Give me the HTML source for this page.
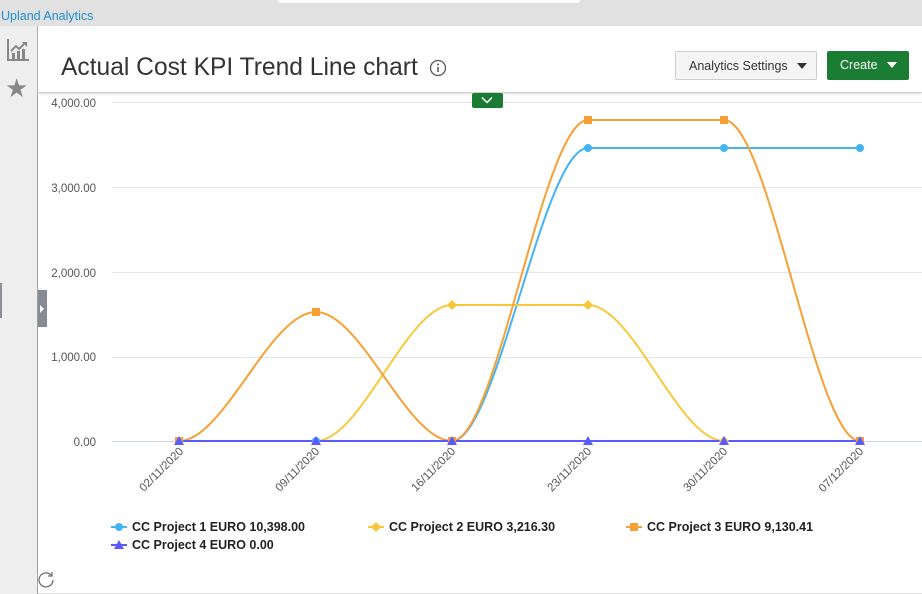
<!DOCTYPE html>
<html><head><meta charset="utf-8"><style>
body{margin:0;width:922px;height:594px;overflow:hidden;background:#fff;font-family:"Liberation Sans",sans-serif;position:relative}
.top{position:absolute;left:0;top:0;width:922px;height:26px;background:#e1e1e1}
.tab{position:absolute;left:278px;top:0;width:302px;height:3px;background:#fff;border-radius:0 0 4px 4px}
.brand{position:absolute;left:1px;top:9px;font-size:12.5px;color:#1e90d0}
.side{position:absolute;left:0;top:26px;width:37px;height:568px;background:#eeeeee;border-right:1px solid #a0a0a0}
.hdr{position:absolute;left:38px;top:26px;width:884px;height:66px;border-bottom:1px solid #d0d0d0;box-shadow:0 1px 2px #ddd}
h1{position:absolute;left:61px;top:54px;margin:0;font-weight:normal;font-size:24.6px;color:#333}
.btn{position:absolute;top:51px;height:29px;border-radius:2px;font-size:12.5px;line-height:29px;box-sizing:border-box}
.as{left:675px;width:142px;border:1px solid #ccc;background:#f5f5f5;color:#333;padding-left:13px}
.cr{left:827px;width:82px;background:#1b7d33;color:#fff;padding-left:13px}
.tri{display:inline-block;width:0;height:0;border-left:5px solid transparent;border-right:5px solid transparent;border-top:6px solid currentColor;margin-left:9px;vertical-align:1px}
</style></head><body>
<div class="top"><div class="tab"></div><div class="brand">Upland Analytics</div></div>
<div class="side"></div>
<div style="position:absolute;left:0;top:283px;width:2px;height:35px;background:#8a8f99"></div>
<div style="position:absolute;left:38px;top:290px;width:9px;height:37px;background:#878c94"></div>
<div style="position:absolute;left:40px;top:305px;width:0;height:0;border-top:4px solid transparent;border-bottom:4px solid transparent;border-left:4px solid #fff"></div>
<svg style="position:absolute;left:6px;top:38px" width="24" height="24" viewBox="0 0 24 24"><path d="M2 1v21h21" stroke="#888" stroke-width="2" fill="none"/><rect x="6" y="15" width="3" height="6" fill="#888"/><rect x="11" y="13" width="3" height="8" fill="#888"/><rect x="16" y="11" width="3" height="10" fill="#888"/><path d="M5 13l5-5 3 3 6-6" stroke="#888" stroke-width="2" fill="none"/><path d="M16 4h5v5z" fill="#888"/></svg>
<div style="position:absolute;left:5px;top:74px;font-size:26px;color:#888;line-height:28px">★</div>
<div class="hdr"></div>
<h1>Actual Cost KPI Trend Line chart</h1>
<svg style="position:absolute;left:429px;top:59px" width="18" height="18"><circle cx="9" cy="9" r="7.5" stroke="#555" stroke-width="1.3" fill="none"/><rect x="8.3" y="8" width="1.5" height="5" fill="#555"/><circle cx="9" cy="5.5" r="1" fill="#555"/></svg>
<div class="btn as">Analytics Settings<span class="tri"></span></div>
<div class="btn cr">Create<span class="tri"></span></div>
<svg style="position:absolute;left:0;top:0" width="922" height="594">
<g stroke="#e6e6e6"><line x1="112" y1="102.5" x2="922" y2="102.5"/><line x1="112" y1="187.5" x2="922" y2="187.5"/><line x1="112" y1="272.5" x2="922" y2="272.5"/><line x1="112" y1="357.5" x2="922" y2="357.5"/></g>
<rect x="472" y="93" width="31" height="15" rx="2" fill="#1b7d33"/><path d="M482 97.5l5 5 5-5" stroke="#fff" stroke-width="1.5" fill="none"/>
<line x1="112" y1="441.5" x2="922" y2="441.5" stroke="#ccd6eb"/>
<g font-size="11.5" fill="#555" text-anchor="end"><text x="96" y="107">4,000.00</text><text x="96" y="192">3,000.00</text><text x="96" y="277">2,000.00</text><text x="96" y="361">1,000.00</text><text x="96" y="446">0.00</text></g>
<g font-size="11.5" fill="#555" text-anchor="end">
<text transform="translate(184,452) rotate(-45)">02/11/2020</text><text transform="translate(320,452) rotate(-45)">09/11/2020</text><text transform="translate(456,452) rotate(-45)">16/11/2020</text><text transform="translate(592,452) rotate(-45)">23/11/2020</text><text transform="translate(728,452) rotate(-45)">30/11/2020</text><text transform="translate(864,452) rotate(-45)">07/12/2020</text></g>
<g fill="none" stroke-width="2">
<path d="M179 441H452C497 441 543 148 588 148H860" stroke="#44b3f2"/>
<path d="M179 441H316C361 441 407 305 452 305H588C633 305 679 441 724 441H860" stroke="#f9c83a"/>
<path d="M179 441C224 441 270 312 316 312C361 312 407 441 452 441C497 441 543 120 588 120H724C769 120 815 441 860 441" stroke="#f7a035"/>
<path d="M179 441H860" stroke="#5a5aff"/>
</g>
<g fill="#44b3f2"><circle cx="588" cy="148" r="4"/><circle cx="724" cy="148" r="4"/><circle cx="860" cy="148" r="4"/><circle cx="316" cy="441" r="4"/></g>
<g fill="#f9c83a"><path d="M452 300l5 5-5 5-5-5z"/><path d="M588 300l5 5-5 5-5-5z"/><path d="M724 436l5 5-5 5-5-5z"/></g>
<g fill="#f7a035"><rect x="175" y="437" width="8" height="8"/><rect x="312" y="308" width="8" height="8"/><rect x="448" y="437" width="8" height="8"/><rect x="584" y="116" width="8" height="8"/><rect x="720" y="116" width="8" height="8"/><rect x="856" y="437" width="8" height="8"/></g>
<g fill="#5a5aff"><path d="M179 436l5 9h-10z"/><path d="M316 436l5 9h-10z"/><path d="M452 436l5 9h-10z"/><path d="M588 436l5 9h-10z"/><path d="M724 436l5 9h-10z"/><path d="M860 436l5 9h-10z"/></g>
<g font-size="12.5" font-weight="bold" fill="#222">
<line x1="111" y1="527" x2="127" y2="527" stroke="#44b3f2" stroke-width="2"/><circle cx="119" cy="527" r="4" fill="#44b3f2"/><text x="132" y="531">CC Project 1 EURO 10,398.00</text>
<line x1="368" y1="527" x2="384" y2="527" stroke="#f9c83a" stroke-width="2"/><path d="M376 522l5 5-5 5-5-5z" fill="#f9c83a"/><text x="389" y="531">CC Project 2 EURO 3,216.30</text>
<line x1="626" y1="527" x2="642" y2="527" stroke="#f7a035" stroke-width="2"/><rect x="630" y="523" width="8" height="8" fill="#f7a035"/><text x="647" y="531">CC Project 3 EURO 9,130.41</text>
<line x1="111" y1="545" x2="127" y2="545" stroke="#5a5aff" stroke-width="2"/><path d="M119 540l5 9h-10z" fill="#5a5aff"/><text x="132" y="549">CC Project 4 EURO 0.00</text>
</g>
<path d="M53 580a7 7 0 1 1-2-5" stroke="#666" stroke-width="1.2" fill="none"/><path d="M52 572v4h-4" stroke="#666" stroke-width="1.2" fill="none"/>
<line x1="38" y1="593.5" x2="922" y2="593.5" stroke="#ddd"/>
</svg>
</body></html>
